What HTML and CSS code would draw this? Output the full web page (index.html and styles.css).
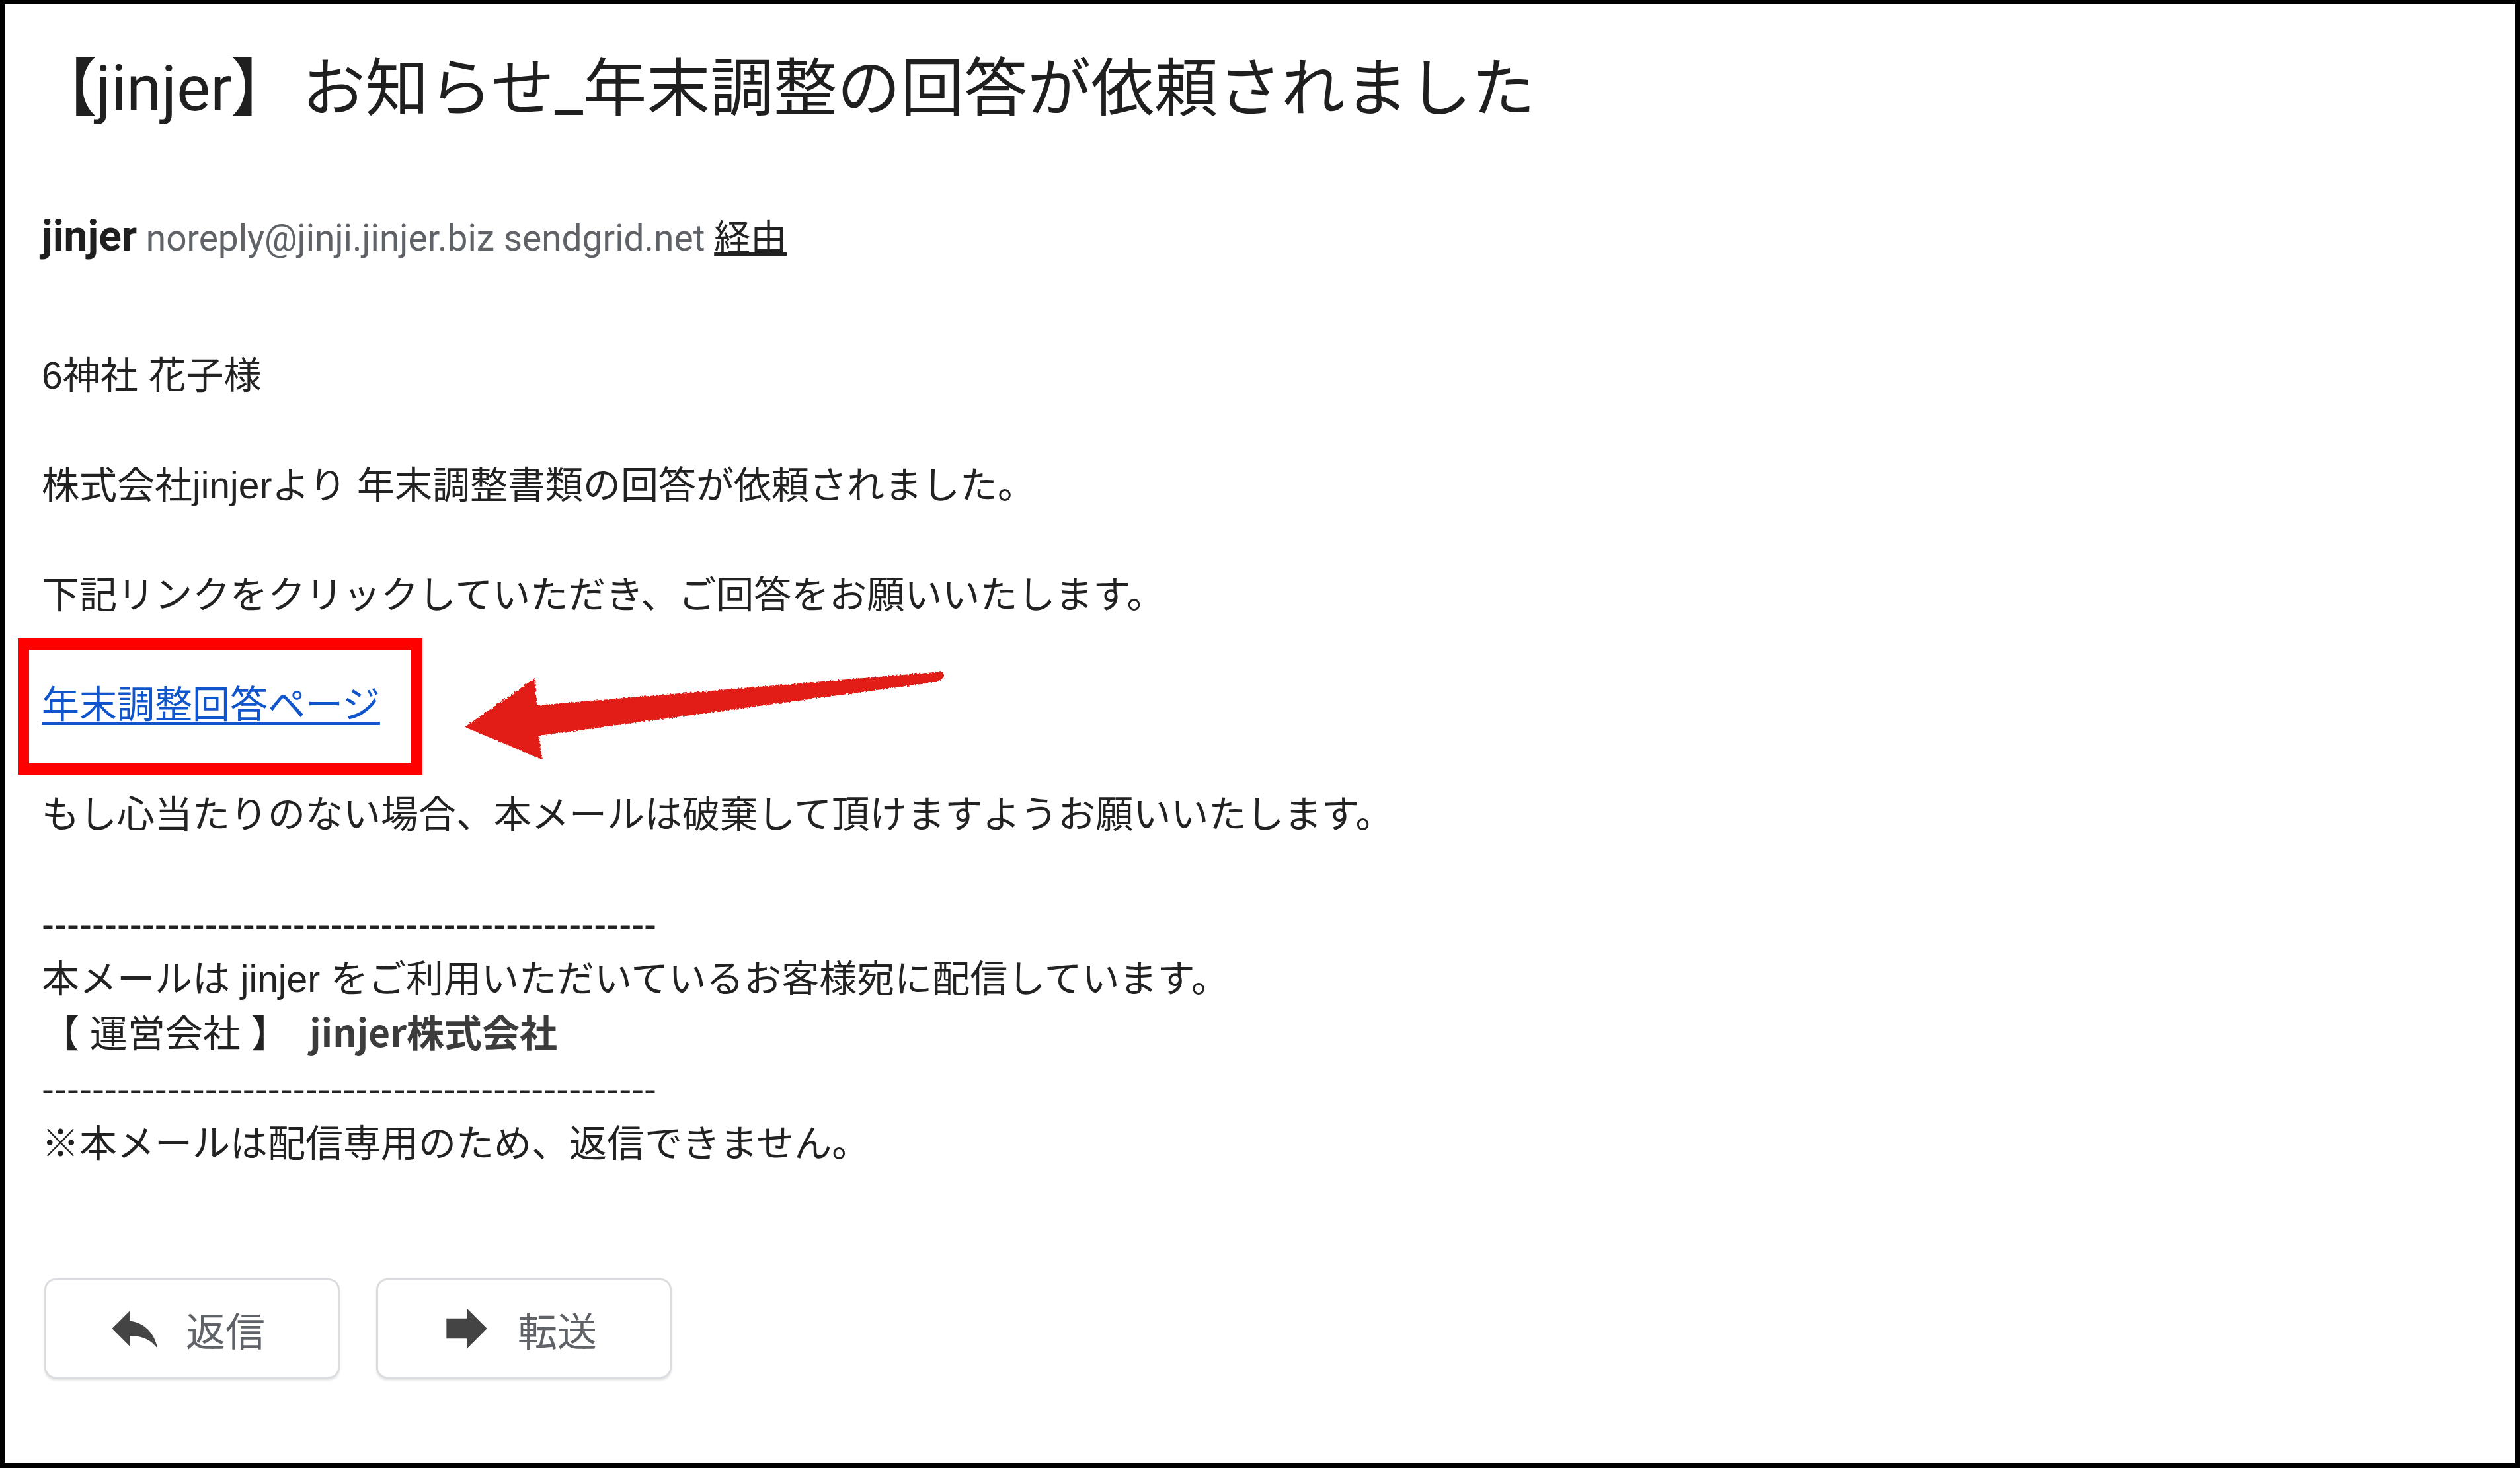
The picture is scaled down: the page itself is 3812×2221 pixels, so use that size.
FILE: index.html
```html
<!DOCTYPE html>
<html lang="ja">
  <head>
    <meta charset="UTF-8">
    <title>【jinjer】お知らせ_年末調整の回答が依頼されました</title>
    <link rel="stylesheet" href="styles.css">
  </head>
  <body>
    <div class="mail">
      <h1 class="subject"><span class="bracket">【</span>jinjer<span class="bracket close">】</span>お知らせ_年末調整の回答が依頼されました</h1>

      <div class="sender">
        <span class="name">jinjer</span>
        <span class="addr">noreply@jinji.jinjer.biz sendgrid.net <u class="via">経由</u></span>
      </div>

      <div class="body">
        <p>6神社 花子様</p>
        <p>株式会社jinjerより 年末調整書類の回答が依頼されました。</p>
        <p>下記リンクをクリックしていただき、ご回答をお願いいたします。</p>
        <p class="link-line">
          <a href="#">年末調整回答ページ</a>
          <span class="mark-box"></span>
          <svg class="mark-arrow" viewBox="0 0 760 170" width="760" height="170">
            <defs>
              <filter id="rough">
                <feTurbulence type="fractalNoise" baseFrequency="0.35" numOctaves="2" result="noise"/>
                <feDisplacementMap in="SourceGraphic" in2="noise" scale="5"/>
              </filter>
            </defs>
            <polygon filter="url(#rough)" fill="#e21a12" points="13,105 119,31 122,72 736,21 738,30 726,37 125,118 130,154"/>
          </svg>
        </p>
        <p>もし心当たりのない場合、本メールは破棄して頂けますようお願いいたします。</p>
        <p>
          -------------------------------------------------<br>
          本メールは jinjer をご利用いただいているお客様宛に配信しています。<br>
          【 運営会社 】&nbsp; <b class="company">jinjer株式会社</b><br>
          -------------------------------------------------<br>
          ※本メールは配信専用のため、返信できません。
        </p>
      </div>

      <div class="actions">
        <button class="action">
          <svg viewBox="0 0 24 24" width="92" height="92"><path fill="#444" d="M10 9V5l-7 7 7 7v-4.1c5 0 8.5 1.6 11 5.1-1-5-4-10-11-11z"/></svg>
          <span>返信</span>
        </button>
        <button class="action">
          <svg viewBox="0 0 24 24" width="92" height="92"><path fill="#444" d="M12 8V4l8 8-8 8v-4H4V8z"/></svg>
          <span>転送</span>
        </button>
      </div>
    </div>
  </body>
</html>
```

FILE: styles.css
```css
html, body {
  margin: 0;
  background: #fff;
}
.mail {
  box-sizing: border-box;
  width: 3812px;
  height: 2221px;
  border-style: solid;
  border-color: #000;
  border-width: 6px 7px 8px 7px;
  padding: 55px 56px 0 56px;
  color: #222;
  font-family: "Liberation Sans", "Noto Sans CJK JP", sans-serif;
}
.subject {
  margin: 0 0 0 34px;
  font-family: Roboto, "Noto Sans CJK JP", sans-serif;
  font-size: 96px;
  font-weight: 400;
  line-height: 130px;
  color: #1f1f1f;
  white-space: nowrap;
}
.bracket {
  font-family: "Noto Sans CJK JP", sans-serif;
  font-feature-settings: "palt";
}
.bracket.close {
  margin-right: 58px;
}
.sender {
  margin-top: 117px;
  font-family: Roboto, "Noto Sans CJK JP", sans-serif;
  font-size: 55px;
  line-height: 83px;
  white-space: nowrap;
}
.name {
  font-size: 64px;
  font-weight: 700;
  color: #1f1f1f;
}
.addr {
  color: #5f6368;
}
.via {
  color: #222;
}
.body {
  margin-top: 125px;
  font-size: 57px;
  line-height: 83px;
}
.body p {
  margin: 0 0 83px 0;
  white-space: nowrap;
}
.body p:last-child {
  margin-bottom: 0;
}
.company {
  font-family: "Noto Sans CJK JP", sans-serif;
  font-weight: 700;
  line-height: 1;
  color: #3c3c3c;
}
.link-line {
  position: relative;
}
.link-line a {
  color: #15c;
  text-decoration: underline;
  text-underline-offset: 6px;
}
.mark-box {
  position: absolute;
  left: -36px;
  top: -59px;
  width: 612px;
  height: 206px;
  box-sizing: border-box;
  border: 17px solid #ff0000;
}
.mark-arrow {
  position: absolute;
  left: 627px;
  top: -30px;
}
.actions {
  display: flex;
  gap: 55px;
  margin: 162px 0 0 4px;
}
.action {
  display: flex;
  align-items: center;
  gap: 31px;
  box-sizing: border-box;
  width: 447px;
  height: 152px;
  padding: 0 0 0 88px;
  background: #fff;
  border: 3px solid #dadce0;
  border-radius: 17px;
  box-shadow: 0 3px 3px rgba(60, 64, 67, 0.12);
  font-family: Roboto, "Noto Sans CJK JP", sans-serif;
  font-size: 60px;
  color: #5f6368;
  cursor: pointer;
}
.action svg {
  flex: none;
}
```
